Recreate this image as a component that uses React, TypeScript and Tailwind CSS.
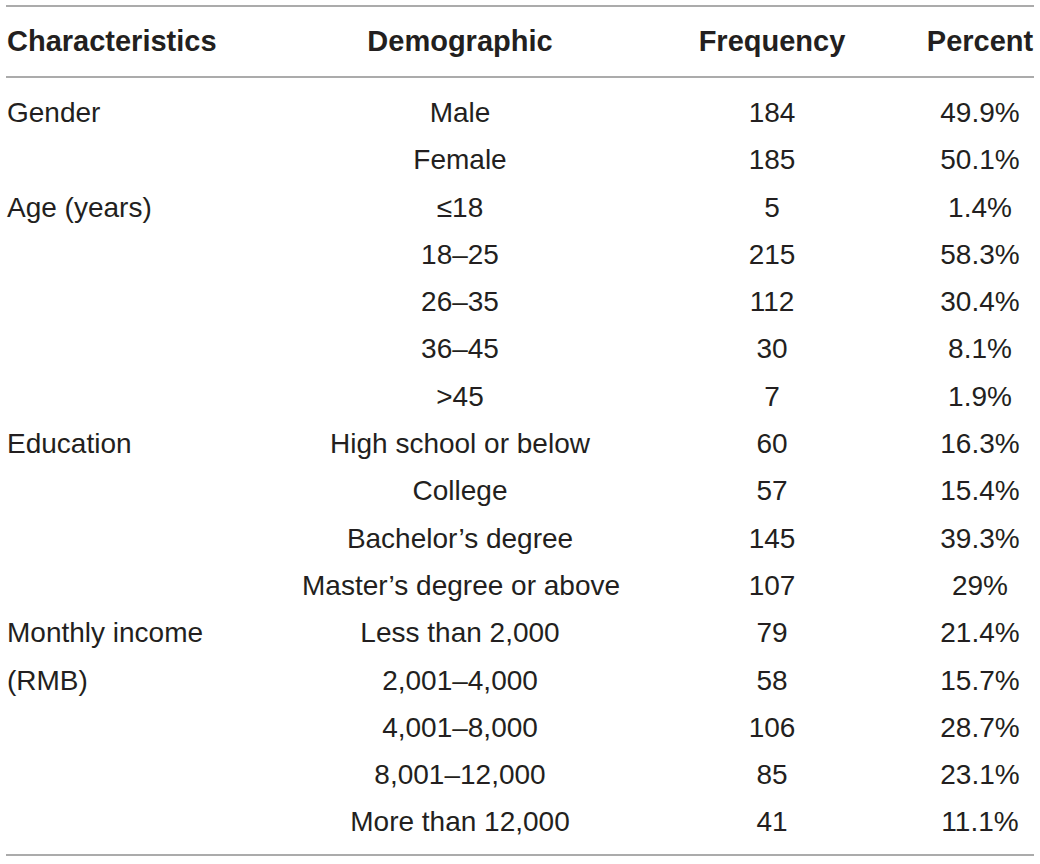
const ROWS: [string, string, string, string][] = [
  ["Gender", "Male", "184", "49.9%"],
  ["", "Female", "185", "50.1%"],
  ["Age (years)", "≤18", "5", "1.4%"],
  ["", "18–25", "215", "58.3%"],
  ["", "26–35", "112", "30.4%"],
  ["", "36–45", "30", "8.1%"],
  ["", ">45", "7", "1.9%"],
  ["Education", "High school or below", "60", "16.3%"],
  ["", "College", "57", "15.4%"],
  ["", "Bachelor’s degree", "145", "39.3%"],
  ["", "Master’s degree or above", "107", "29%"],
  ["Monthly income", "Less than 2,000", "79", "21.4%"],
  ["(RMB)", "2,001–4,000", "58", "15.7%"],
  ["", "4,001–8,000", "106", "28.7%"],
  ["", "8,001–12,000", "85", "23.1%"],
  ["", "More than 12,000", "41", "11.1%"],
];

const COLS = "grid grid-cols-[296px_316px_308px_108px]";

export default function App() {
  return (
    <div
      className="w-[1040px] h-[864px] bg-white px-[6px] pt-[5px] text-[#231f20]"
      style={{ fontFamily: '"Liberation Sans", Arial, sans-serif' }}
    >
      <div className="border-t-2 border-b-2 border-[#ababab]">
        <div
          className={`${COLS} h-[71px] items-start text-[29px] font-bold leading-[69px] border-b-2 border-[#ababab]`}
        >
          <div className="pl-[1px] whitespace-nowrap">Characteristics</div>
          <div className="text-center">Demographic</div>
          <div className="text-center">Frequency</div>
          <div className="text-center">Percent</div>
        </div>
        <div className="pt-[11px] pb-[8px]">
          {ROWS.map(([c, d, f, p], i) => (
            <div
              key={i}
              className={`${COLS} h-[47.3px] text-[28px] leading-[47.3px]`}
            >
              <div className="pl-[1px] whitespace-nowrap">{c}</div>
              <div className="text-center whitespace-nowrap">{d}</div>
              <div className="text-center">{f}</div>
              <div className="text-center">{p}</div>
            </div>
          ))}
        </div>
      </div>
    </div>
  );
}
